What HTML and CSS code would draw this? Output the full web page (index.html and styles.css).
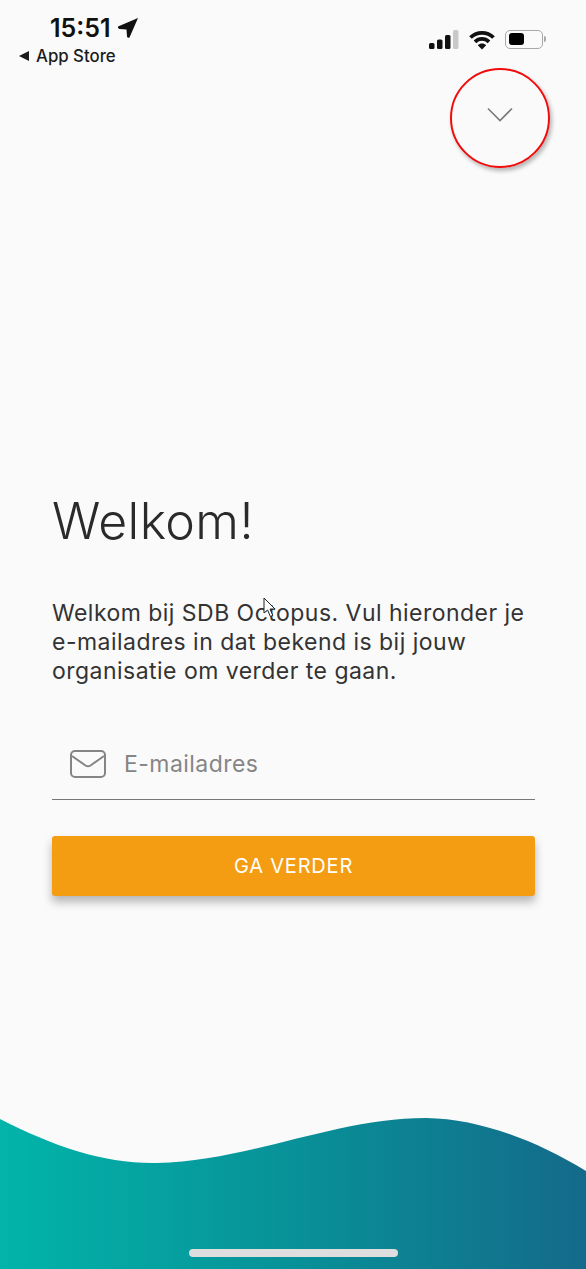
FILE: index.html
```html
<!DOCTYPE html>
<html lang="nl">
<head>
  <meta charset="UTF-8" />
  <meta name="viewport" content="width=device-width, initial-scale=1.0"/>
  <title>Welkom</title>
  <link rel="stylesheet" href="styles.css">
</head>
<body>
  <div class="screen">
    <header class="status-bar">
      <div class="status-left">
        <div class="clock">
          <span>15:51</span>
          <svg class="location" viewBox="0 0 20 20"><path d="M20 0 L0 8.5 Q-0.5 10.5 1.5 11 L8.5 11.5 L9 18.5 Q9.6 20.5 11.5 19.5 Z"/></svg>
        </div>
        <div class="back-app"><span class="back-arrow"></span>App Store</div>
      </div>
      <div class="status-right">
        <svg class="signal" viewBox="0 0 30 20">
          <rect x="0" y="13" width="5.5" height="6" rx="1.5"/>
          <rect x="8" y="9.5" width="5.5" height="9.5" rx="1.5"/>
          <rect x="16" y="5" width="5.5" height="14" rx="1.5"/>
          <rect class="signal-off" x="24" y="0" width="5.5" height="19" rx="1.5"/>
        </svg>
        <svg class="wifi" viewBox="0 0 26 20">
          <path class="wifi-arc" d="M1.5 7.5 C8 1.2 18 1.2 24.5 7.5"/>
          <path class="wifi-arc" d="M6 11.8 C10 8 16 8 20 11.8"/>
          <path class="wifi-dot" d="M13 19.5 L8.8 15.2 C11 13 15 13 17.2 15.2 Z"/>
        </svg>
        <div class="battery"><div class="battery-level"></div></div>
        <div class="battery-cap"></div>
      </div>
    </header>

    <div class="top-action">
      <div class="highlight">
        <svg class="chevron" viewBox="0 0 26 16"><path d="M1 1.5 L13 13.5 L25 1.5"/></svg>
      </div>
    </div>

    <main class="content">
      <h1>Welkom!</h1>
      <p class="intro">Welkom bij SDB Octopus. Vul hieronder je<br>e-mailadres in dat bekend is bij jouw<br>organisatie om verder te gaan.<svg class="cursor" viewBox="0 0 14 22"><path d="M1 1 L1 16 L4.6 13 L7.4 19.5 L9.8 18.4 L7 12 L12 12 Z"/></svg></p>
      <div class="email-field">
        <svg class="mail" viewBox="0 0 36 28">
          <rect x="1" y="1" width="34" height="26" rx="4"/>
          <path d="M2 6 L15.5 15.5 Q18 17 20.5 15.5 L34 6"/>
        </svg>
        <span class="placeholder">E-mailadres</span>
      </div>
      <button class="next-btn">GA VERDER</button>
    </main>

    <footer class="wave">
      <svg class="wave-shape" viewBox="0 0 586 151" preserveAspectRatio="none">
        <defs>
          <linearGradient id="waveGrad" x1="0" y1="0" x2="1" y2="0">
            <stop offset="0" stop-color="#02b4aa"/>
            <stop offset="0.5" stop-color="#089198"/>
            <stop offset="1" stop-color="#146a8a"/>
          </linearGradient>
        </defs>
        <path fill="url(#waveGrad)" d="M0 1 C55 29 105 46 157 45 C250 43 335 0 426 0 C480 1 535 22 586 53 L586 151 L0 151 Z"/>
      </svg>
      <div class="home-bar"></div>
    </footer>
  </div>
</body>
</html>
```

FILE: styles.css
```css
body {
  margin: 0;
  background-color: #fafafa;
  font-family: Inter, Arial, sans-serif;
  color: #2b2b2b;
}

.screen {
  height: 1269px;
  display: flex;
  flex-direction: column;
  overflow: hidden;
}

/* status bar */
.status-bar {
  height: 66px;
  display: flex;
  justify-content: space-between;
  padding: 15px 40px 0 19px;
  box-sizing: border-box;
}

.clock {
  display: flex;
  align-items: center;
  gap: 7px;
  margin-left: 31px;
  height: 26px;
  font-size: 25px;
  font-weight: 600;
  color: #111;
}

.location {
  width: 20px;
  height: 20px;
  fill: #111;
}

.back-app {
  display: flex;
  align-items: center;
  margin-top: 5px;
  font-size: 16.8px;
  font-weight: 500;
  color: #1c1c1c;
}

.back-arrow {
  width: 0;
  height: 0;
  margin-right: 7px;
  border-top: 5px solid transparent;
  border-bottom: 5px solid transparent;
  border-right: 10px solid #1c1c1c;
}

.status-right {
  display: flex;
  align-items: flex-start;
  padding-top: 15px;
}

.signal {
  width: 30px;
  height: 20px;
  fill: #111;
}

.signal-off {
  fill: #c9c9c9;
}

.wifi {
  width: 26px;
  height: 20px;
  margin-left: 10px;
}

.wifi-arc {
  fill: none;
  stroke: #111;
  stroke-width: 3.8;
}

.wifi-dot {
  fill: #111;
}

.battery {
  width: 38px;
  height: 19px;
  margin-left: 10px;
  padding: 2px 3px;
  box-sizing: border-box;
  border: 1.5px solid #a8a8a8;
  border-radius: 5px;
}

.battery-level {
  width: 15px;
  height: 12px;
  background-color: #000;
  border-radius: 3px;
}

.battery-cap {
  width: 2px;
  height: 6px;
  margin: 6px 0 0 1px;
  background-color: #a8a8a8;
  border-radius: 0 2px 2px 0;
}

/* red annotation circle */
.top-action {
  display: flex;
  justify-content: flex-end;
  padding: 2px 36px 0 0;
}

.highlight {
  width: 100px;
  height: 100px;
  box-sizing: border-box;
  display: flex;
  align-items: center;
  justify-content: center;
  border: 2px solid #f00c0c;
  border-radius: 50%;
  box-shadow: 2px 3px 4px rgba(0, 0, 0, 0.28);
}

.chevron {
  width: 26px;
  height: 16px;
  margin-top: -7px;
  fill: none;
  stroke: #7a7a7a;
  stroke-width: 1.6;
}

/* login form */
.content {
  flex: 1;
  padding: 323px 51px 0 52px;
}

h1 {
  margin: 0;
  font-size: 50px;
  line-height: 60px;
  font-weight: 300;
  letter-spacing: 0.4px;
  color: #2a2a2a;
}

.intro {
  position: relative;
  margin: 48px 0 0;
  font-size: 23px;
  line-height: 29px;
  font-weight: 400;
  letter-spacing: 0.47px;
  color: #333;
}

.cursor {
  position: absolute;
  left: 211px;
  top: -2px;
  width: 14px;
  height: 22px;
  fill: #fff;
  stroke: #222;
  stroke-width: 1;
}

.email-field {
  display: flex;
  align-items: center;
  height: 71px;
  margin-top: 42px;
  padding-left: 18px;
  border-bottom: 1px solid #777;
}

.mail {
  width: 36px;
  height: 28px;
  margin-right: 18px;
  fill: none;
  stroke: #858585;
  stroke-width: 2;
}

.placeholder {
  font-size: 23px;
  letter-spacing: 0.45px;
  color: #858585;
}

.next-btn {
  display: block;
  width: 100%;
  height: 60px;
  margin-top: 36px;
  border: none;
  border-radius: 3px;
  background-color: #f49d12;
  color: #fff;
  font-family: Inter, Arial, sans-serif;
  font-size: 20px;
  font-weight: 400;
  letter-spacing: 0.8px;
  box-shadow: 0 6px 10px rgba(0, 0, 0, 0.28);
}

/* bottom wave */
.wave {
  position: relative;
  height: 151px;
}

.wave-shape {
  display: block;
  width: 100%;
  height: 100%;
}

.home-bar {
  position: absolute;
  left: 189px;
  bottom: 12px;
  width: 209px;
  height: 8px;
  border-radius: 4px;
  background-color: #dedede;
}
```
